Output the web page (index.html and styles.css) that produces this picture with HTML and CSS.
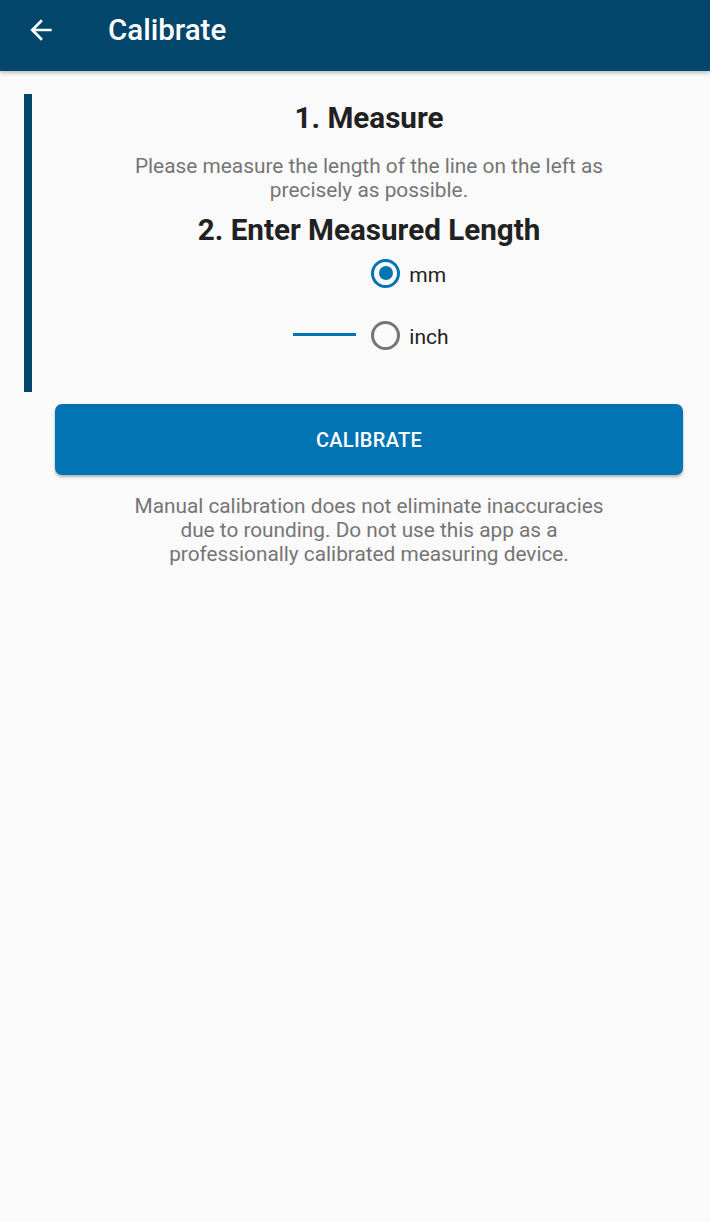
FILE: index.html
```html
<!DOCTYPE html>
<html lang="en">
<head>
<meta charset="utf-8">
<title>Calibrate</title>
<link rel="stylesheet" href="styles.css">
</head>
<body>
<header class="appbar">
  <button class="back" aria-label="Back">
    <svg viewBox="0 0 24 24" width="32" height="32"><path fill="#fff" d="M20 11H7.83l5.59-5.59L12 4l-8 8 8 8 1.41-1.41L7.83 13H20v-2z"/></svg>
  </button>
  <h1 class="title">Calibrate</h1>
</header>
<main class="main">
  <section class="calib">
    <div class="bar"></div>
    <div class="calib-body">
      <h2 class="step">1. Measure</h2>
      <p class="desc">Please measure the length of the line on the left as precisely as possible.</p>
      <h2 class="step step2">2. Enter Measured Length</h2>
      <div class="measure-row">
        <div class="line"></div>
        <div class="radios">
          <label class="radio checked"><span class="circle"></span><span class="lbl">mm</span></label>
          <label class="radio"><span class="circle"></span><span class="lbl">inch</span></label>
        </div>
      </div>
    </div>
  </section>
  <div class="below">
    <button class="calibrate-btn">CALIBRATE</button>
    <p class="note">Manual calibration does not eliminate inaccuracies due to rounding. Do not use this app as a professionally calibrated measuring device.</p>
  </div>
</main>
</body>
</html>
```
FILE: styles.css
```css
* { box-sizing: border-box; }
html, body { margin: 0; padding: 0; }
body {
  background: #fafafa;
  font-family: Roboto, "Liberation Sans", sans-serif;
  width: 710px;
  min-height: 1222px;
}
.appbar {
  height: 71px;
  padding-bottom: 12px;
  background: #02466b;
  display: flex;
  align-items: center;
  box-shadow: 0 2px 4px rgba(0,0,0,0.25);
  position: relative;
}
.back {
  background: none;
  border: 0;
  padding: 0;
  margin-left: 25px;
  width: 32px;
  height: 32px;
  display: flex;
}
.title {
  margin: 0 0 0 51px;
  color: #fff;
  font-size: 29.5px;
  font-weight: 500;
  line-height: 32px;
}
.main {
  padding: 23px 4px 0 24px;
}
.calib {
  display: flex;
  height: 298px;
}
.bar {
  width: 8px;
  background: #02466b;
  flex: none;
}
.calib-body {
  flex: 1;
  display: flex;
  flex-direction: column;
  align-items: center;
  text-align: center;
}
.step {
  margin: 8px 0 0;
  font-size: 29.6px;
  font-weight: 700;
  line-height: 32px;
  color: #212121;
}
.desc {
  margin: 20px 0 0;
  width: 490px;
  font-size: 20.85px;
  line-height: 24px;
  color: #757575;
}
.step2 { margin-top: 12px; }
.measure-row {
  display: flex;
  align-items: flex-end;
  margin-left: 4px;
  margin-top: 7px;
}
.line {
  width: 63px;
  height: 3px;
  background: #0273b3;
  margin-right: 15px;
  margin-bottom: 19px;
}
.radios {
  display: flex;
  flex-direction: column;
  gap: 22px;
}
.radio {
  display: flex;
  align-items: center;
  height: 40px;
  gap: 9px;
}
.circle {
  width: 29px;
  height: 29px;
  border-radius: 50%;
  border: 3px solid #757575;
  display: flex;
  align-items: center;
  justify-content: center;
}
.radio.checked .circle { border-color: #0273b3; }
.radio.checked .circle::after {
  content: "";
  width: 14px;
  height: 14px;
  border-radius: 50%;
  background: #0273b3;
}
.lbl {
  font-size: 21px;
  color: #212121;
  margin-top: 3px;
}
.below {
  margin-left: 8px;
  display: flex;
  flex-direction: column;
  align-items: center;
}
.calibrate-btn {
  margin-top: 12px;
  width: 628px;
  height: 71px;
  border: 0;
  border-radius: 7px;
  background: #0273b3;
  color: #fff;
  font-family: Roboto, "Liberation Sans", sans-serif;
  font-size: 20px;
  font-weight: 500;
  letter-spacing: 0.3px;
  box-shadow: 0 2px 3px rgba(0,0,0,0.3);
}
.note {
  margin: 19px 0 0;
  width: 490px;
  text-align: center;
  font-size: 20.8px;
  line-height: 24px;
  color: #757575;
}
```
